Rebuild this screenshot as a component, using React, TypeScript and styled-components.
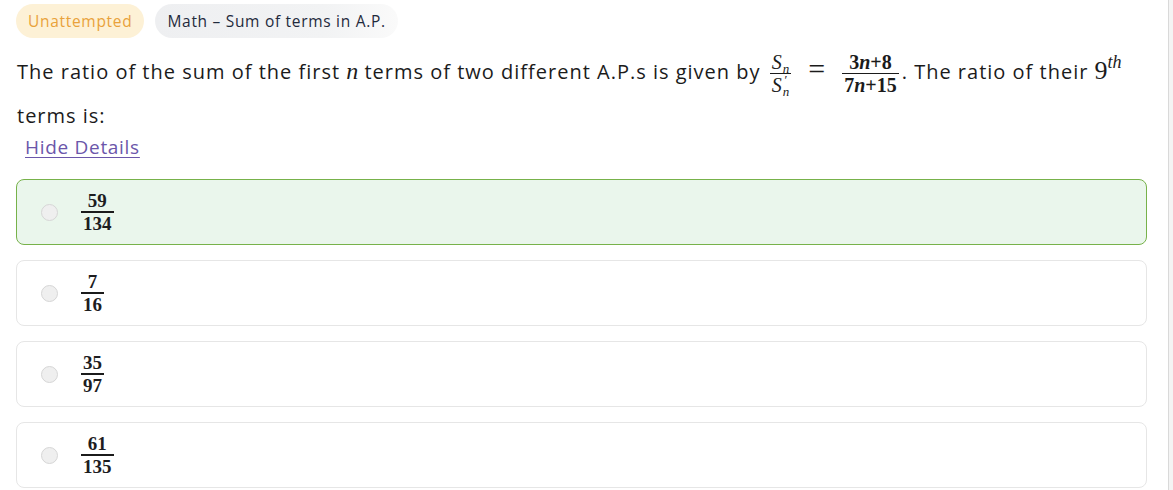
import React from "react";
import styled, { createGlobalStyle } from "styled-components";

const GlobalStyle = createGlobalStyle`
  html, body {
    margin: 0;
    padding: 0;
    background: #f4f4f4;
  }
  body {
    font-family: "Open Sans", "Noto Sans", sans-serif;
    color: #1d1d1f;
  }
`;

const Page = styled.div`
  width: 1169px;
  height: 490px;
  background: #fff;
  border-right: 1px solid #d9d9d9;
  box-sizing: border-box;
  padding: 4px 21px 0 16px;
  overflow: hidden;
`;

const Tags = styled.div`
  display: flex;
  gap: 11px;
`;

const Tag = styled.span<{ $tone: "warn" | "plain" }>`
  display: inline-flex;
  align-items: center;
  height: 34px;
  padding: 0 12px;
  border-radius: 17px;
  font-size: 15.5px;
  letter-spacing: 0.7px;
  font-weight: 500;
  background: ${(p) =>
    p.$tone === "warn"
      ? "#fdf1d6"
      : "linear-gradient(90deg, #eeeff1 0%, #f2f3f4 70%, #fafafa 100%)"};
  color: ${(p) => (p.$tone === "warn" ? "#e9a23b" : "#1f2a3c")};
`;

const Question = styled.p`
  margin: 9px 0 0 1px;
  font-size: 20px;
  letter-spacing: 1px;
  line-height: 44px;
  color: #1b1b1b;
`;

const MathVar = styled.span`
  font-family: "Liberation Serif", "DejaVu Serif", serif;
  font-style: italic;
  font-size: 24px;
  letter-spacing: 0;
`;

const Frac = styled.span<{ $inline?: boolean }>`
  display: inline-flex;
  flex-direction: column;
  align-items: stretch;
  vertical-align: middle;
  font-family: "Liberation Serif", "DejaVu Serif", serif;
  line-height: 1;
  letter-spacing: 0;
  margin: ${(p) => (p.$inline ? "-8px 3px" : "0 2px")};
`;

const FracPart = styled.span<{ $bold?: boolean; $size?: number }>`
  display: block;
  text-align: center;
  font-size: ${(p) => p.$size ?? 20}px;
  font-weight: ${(p) => (p.$bold ? 700 : 400)};
  padding: 1px 2px;
  white-space: nowrap;
`;

const FracBar = styled.span<{ $thick?: boolean }>`
  height: ${(p) => (p.$thick ? 2 : 1)}px;
  background: #1b1b1b;
`;

const It = styled.i`
  font-style: italic;
`;

const Sub = styled.span`
  font-style: italic;
  font-size: 13px;
  vertical-align: -4px;
  line-height: 0;
  margin-left: 1px;
`;

const Scripts = styled.span`
  display: inline-flex;
  flex-direction: column;
  font-size: 13px;
  line-height: 1;
  vertical-align: 8px;
  margin: 0 0 -10px 1px;
`;

const PrimeMark = styled.span`
  line-height: 0.75;
`;

const SubMark = styled.span`
  font-style: italic;
`;

const Eq = styled.span`
  font-family: "Liberation Serif", "DejaVu Serif", serif;
  font-size: 30px;
  letter-spacing: 0;
  margin: 0 14px;
`;

const Sup = styled.sup`
  font-family: "Liberation Serif", "DejaVu Serif", serif;
  font-style: italic;
  font-size: 18px;
  letter-spacing: 0;
  vertical-align: 11px;
  line-height: 0;
`;

const Nine = styled.span`
  font-family: "Liberation Serif", "DejaVu Serif", serif;
  font-size: 26px;
  letter-spacing: 0;
`;

const Toggle = styled.a`
  display: block;
  width: fit-content;
  margin: -3px 0 0 9px;
  font-size: 19px;
  line-height: 24px;
  letter-spacing: 0.7px;
  color: #6b56aa;
  text-decoration: underline;
  text-underline-offset: 3px;
  cursor: pointer;
`;

const Options = styled.div`
  display: flex;
  flex-direction: column;
  gap: 15px;
  margin-top: 20px;
`;

const Option = styled.div<{ $correct?: boolean }>`
  display: flex;
  align-items: center;
  gap: 21px;
  height: 66px;
  box-sizing: border-box;
  padding-left: 24px;
  border-radius: 8px;
  border: 1px solid ${(p) => (p.$correct ? "#77b24a" : "#e6e6e6")};
  background: ${(p) => (p.$correct ? "#eaf6ec" : "#fff")};
`;

const Radio = styled.span`
  width: 17px;
  height: 17px;
  border-radius: 50%;
  border: 1px solid #d6d6d6;
  background: #efefef;
  box-sizing: border-box;
`;

const answers = [
  { n: "59", d: "134", correct: true },
  { n: "7", d: "16" },
  { n: "35", d: "97" },
  { n: "61", d: "135" },
];

export default function App() {
  return (
    <>
      <GlobalStyle />
      <Page>
        <Tags>
          <Tag $tone="warn">Unattempted</Tag>
          <Tag $tone="plain">Math – Sum of terms in A.P.</Tag>
        </Tags>
        <Question>
          The ratio of the sum of the first <MathVar>n</MathVar> terms of two different A.P.s is given by{" "}
          <Frac $inline>
            <FracPart>
              <It>S</It>
              <Sub>n</Sub>
            </FracPart>
            <FracBar />
            <FracPart>
              <It>S</It>
              <Scripts>
                <PrimeMark>′</PrimeMark>
                <SubMark>n</SubMark>
              </Scripts>
            </FracPart>
          </Frac>
          <Eq>=</Eq>
          <Frac $inline>
            <FracPart $bold>
              3<It>n</It>+8
            </FracPart>
            <FracBar />
            <FracPart $bold>
              7<It>n</It>+15
            </FracPart>
          </Frac>
          . The ratio of their <Nine>9</Nine>
          <Sup>th</Sup>
          <br />
          terms is:
        </Question>
        <Toggle>Hide Details</Toggle>
        <Options>
          {answers.map((a) => (
            <Option key={a.d} $correct={a.correct}>
              <Radio />
              <Frac>
                <FracPart $bold $size={19}>
                  {a.n}
                </FracPart>
                <FracBar $thick />
                <FracPart $bold $size={19}>
                  {a.d}
                </FracPart>
              </Frac>
            </Option>
          ))}
        </Options>
      </Page>
    </>
  );
}
